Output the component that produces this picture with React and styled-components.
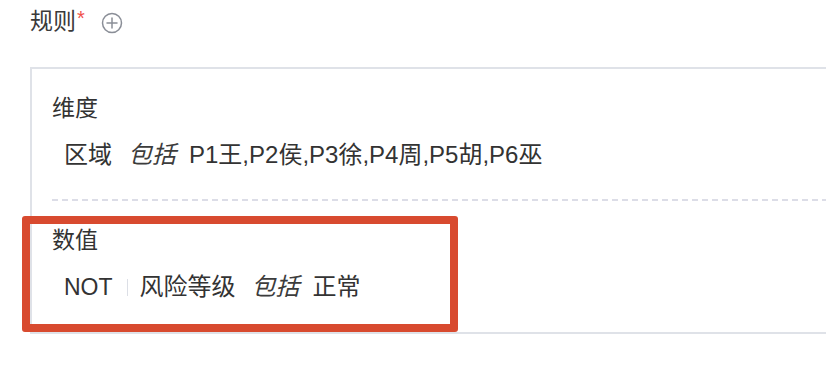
import React from 'react';
import styled, { createGlobalStyle } from 'styled-components';

const GlobalStyle = createGlobalStyle`
  html, body {
    margin: 0;
    padding: 0;
    background: #fff;
    overflow: hidden;
  }
  body {
    font-family: "Liberation Sans", "Noto Sans CJK SC", sans-serif;
    color: #333;
  }
`;

const Page = styled.div`
  position: relative;
  width: 826px;
  height: 366px;
  padding: 5px 0 0 30px;
  box-sizing: border-box;
`;

const Header = styled.div`
  display: flex;
  align-items: center;
  height: 32px;
  font-size: 23px;
  line-height: 32px;
  color: #3a3a3a;
`;

const Required = styled.span`
  color: #f0504a;
  font-size: 20px;
  margin-left: 1px;
  align-self: flex-start;
  line-height: 26px;
`;

const AddButton = styled.button`
  display: flex;
  align-items: center;
  justify-content: center;
  margin-left: 16px;
  margin-top: 4px;
  padding: 0;
  border: none;
  background: none;
  cursor: pointer;
`;

const RuleBox = styled.div`
  margin-top: 30px;
  border: 2px solid #dfe2e8;
  border-right: none;
  padding-left: 20px;
`;

const Section = styled.div`
  padding: ${p => (p.$first ? '23px 0 28px' : '25px 0 29px')};
  background: ${p =>
    p.$first
      ? 'none'
      : 'repeating-linear-gradient(90deg, #dcdde7 0 6px, transparent 6px 10px) top left / 100% 2px no-repeat'};
`;

const Label = styled.div`
  font-size: 23px;
  line-height: 32px;
  color: #333;
`;

const Row = styled.div`
  display: flex;
  align-items: center;
  margin-top: 15px;
  padding-left: 12px;
  font-size: 24px;
  line-height: 32px;
  color: #333;
  white-space: nowrap;
`;

const Field = styled.span``;

const Operator = styled.span`
  font-style: italic;
  margin: 0 13px 0 16px;
  color: #3c3c3c;
`;

const Value = styled.span``;

const Not = styled.span`
  font-size: 23px;
`;

const Divider = styled.span`
  width: 1px;
  height: 17px;
  background: #dcdfe6;
  margin: 0 12px 0 14px;
`;

const Highlight = styled.div`
  position: absolute;
  left: 22px;
  top: 216px;
  width: 436px;
  height: 116px;
  box-sizing: border-box;
  border: 8px solid #d84a2f;
  border-radius: 3px;
  pointer-events: none;
`;

const PlusCircle = () => (
  <svg width="22" height="22" viewBox="0 0 22 22">
    <circle cx="11" cy="11" r="9.5" fill="none" stroke="#8a8e97" strokeWidth="1.5" />
    <path d="M11 6v10M6 11h10" stroke="#8a8e97" strokeWidth="1.5" strokeLinecap="round" />
  </svg>
);

const App = () => {
  const dims = 'P1王,P2侯,P3徐,P4周,P5胡,P6巫';

  return (
    <>
      <GlobalStyle />
      <Page>
        <Header>
          规则
          <Required>*</Required>
          <AddButton aria-label="添加规则">
            <PlusCircle />
          </AddButton>
        </Header>

        <RuleBox>
          <Section $first>
            <Label>维度</Label>
            <Row>
              <Field>区域</Field>
              <Operator>包括</Operator>
              <Value>{dims}</Value>
            </Row>
          </Section>
          <Section>
            <Label>数值</Label>
            <Row>
              <Not>NOT</Not>
              <Divider />
              <Field>风险等级</Field>
              <Operator>包括</Operator>
              <Value>正常</Value>
            </Row>
          </Section>
        </RuleBox>

        <Highlight />
      </Page>
    </>
  );
};

export default App;
